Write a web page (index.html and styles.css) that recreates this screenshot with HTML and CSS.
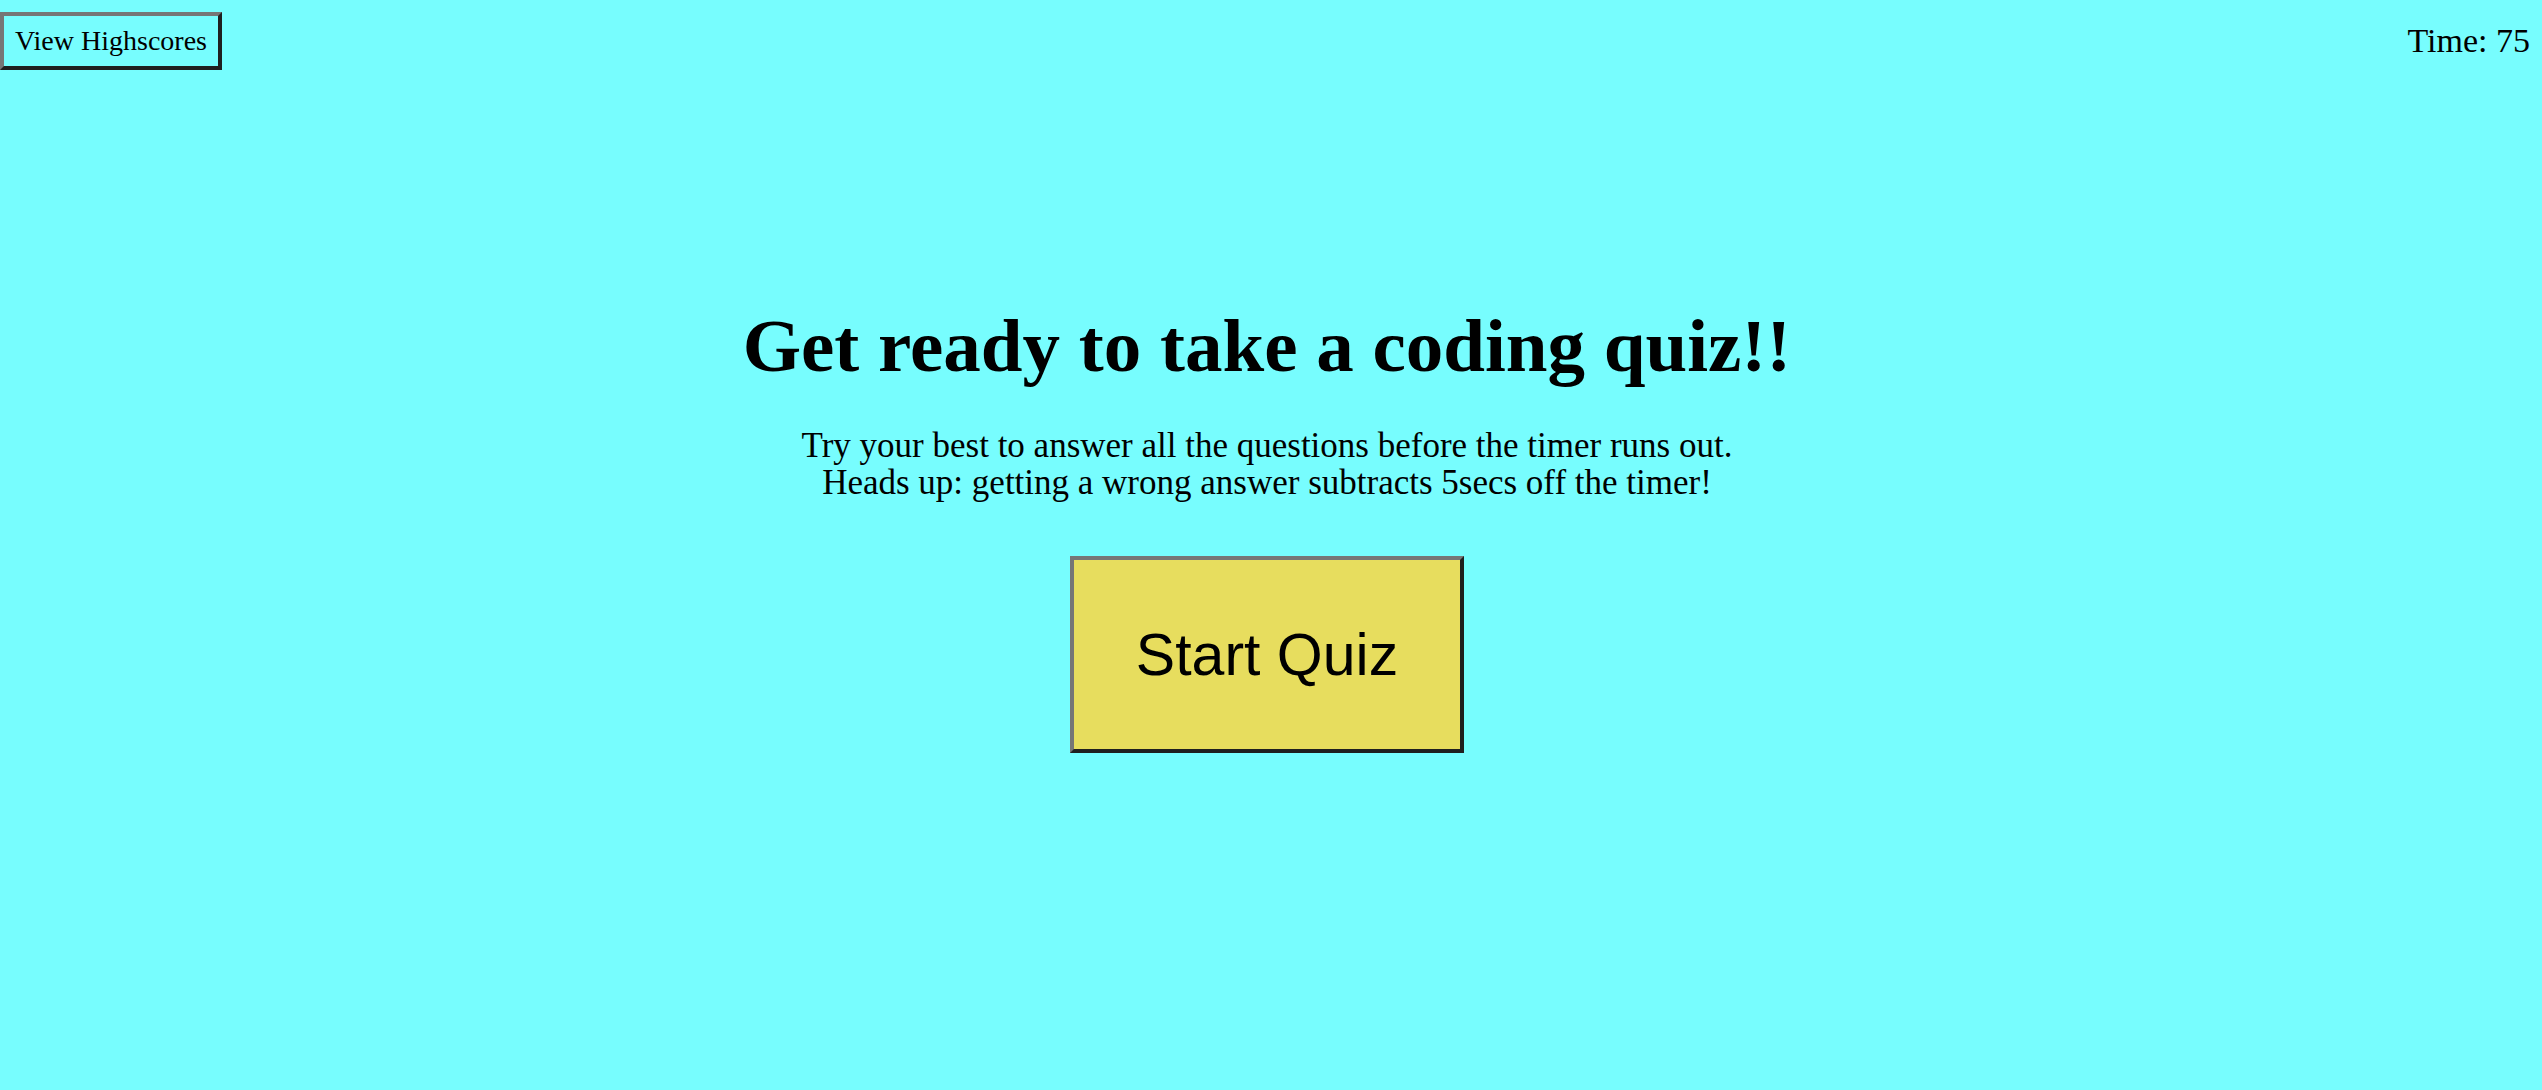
FILE: index.html
```html
<!DOCTYPE html>
<html lang="en">
<head>
<meta charset="utf-8">
<title>Coding Quiz</title>
<link rel="stylesheet" href="styles.css">
</head>
<body>
<header class="topbar">
  <button class="btn-highscores">View Highscores</button>
  <div class="timer">Time: <span>75</span></div>
</header>
<main class="intro">
  <h1 class="intro-title">Get ready to take a coding quiz!!</h1>
  <p class="intro-text">Try your best to answer all the questions before the timer runs out.<br>Heads up: getting a wrong answer subtracts 5secs off the timer!</p>
  <button class="btn-start">Start Quiz</button>
</main>
</body>
</html>
```

FILE: styles.css
```css
html, body {
  margin: 0;
  padding: 0;
}
body {
  background: #77fdfe;
  font-family: "Liberation Serif", "Times New Roman", serif;
  color: #000;
  width: 2542px;
  height: 1090px;
  overflow: hidden;
}
.topbar {
  display: flex;
  justify-content: space-between;
  align-items: flex-start;
  padding: 12px 12px 0 0;
  height: 58px;
}
.btn-highscores {
  font-family: "Liberation Serif", "Times New Roman", serif;
  font-size: 28px;
  background: #77fdfe;
  color: #000;
  width: 222px;
  height: 58px;
  padding: 0;
  border-width: 4px;
  border-style: solid;
  border-color: #767676 #1f1f1f #1f1f1f #767676;
  cursor: pointer;
}
.timer {
  font-size: 34px;
  line-height: 48px;
  margin-top: 5px;
}
.intro {
  display: flex;
  flex-direction: column;
  align-items: center;
  padding-right: 8px;
  padding-top: 231px;
}
.intro-title {
  font-size: 75px;
  font-weight: bold;
  margin: 0;
  line-height: 90px;
}
.intro-text {
  font-size: 35px;
  line-height: 37px;
  text-align: center;
  margin: 36px 0 0 0;
}
.btn-start {
  margin-top: 55px;
  width: 394px;
  height: 197px;
  background: #e7dd5e;
  font-family: "Liberation Sans", Arial, sans-serif;
  font-size: 59px;
  color: #000;
  padding: 0;
  border-width: 4px;
  border-style: solid;
  border-color: #767676 #1f1f1f #1f1f1f #767676;
  cursor: pointer;
}
```
